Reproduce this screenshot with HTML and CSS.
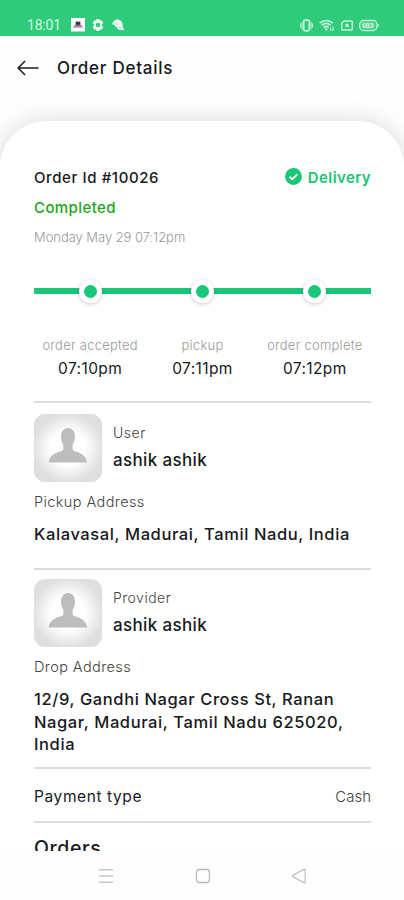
FILE: index.html
```
<!DOCTYPE html>
<html lang="en">
<head>
    <meta charset="UTF-8">
    <meta name="viewport" content="width=device-width, initial-scale=1.0">
    <title>Order Details</title>
    <link rel="stylesheet" href="styles.css">
</head>
<body>
    <div class="status-bar">
        <div class="status-left">
            <span class="clock">18:01</span>
            <svg class="icon-photo" width="14" height="14" viewBox="0 0 14 14">
                <rect width="14" height="13.5" fill="#fff"/>
                <path d="M2 9.5l2.5-3v-3h5v3l2.5 3z" fill="#84647f"/>
                <path d="M5 4h4v2.5H5z" fill="#3f304d"/>
                <path d="M2.5 8.5h9" stroke="#c58b98"/>
            </svg>
            <svg class="icon-gear" width="12" height="12" viewBox="0 0 12 12">
                <path d="M4.5 0h3l.4 1.8 1.8-.5 1.6 2.6L10 5.2v1.6l1.3 1.3-1.6 2.6-1.8-.5-.4 1.8h-3l-.4-1.8-1.8.5L.7 8.1 2 6.8V5.2L.7 3.9l1.6-2.6 1.8.5zM6 3.8a2.2 2.2 0 1 0 0 4.4 2.2 2.2 0 0 0 0-4.4z" fill="#ecfff4" fill-rule="evenodd"/>
            </svg>
            <svg class="icon-bird" width="13" height="12" viewBox="0 0 13 12">
                <path d="M0 5.2C1 2 3.5.2 6.2.6c3 .5 4.400 2.700 4.400 5.400 0 2 .7 3.400 2 4.600-1.800 1-6 .9-7.300-1.100L4.500 7.500 3 7.800 2.800 6z" fill="#e7fbef"/>
                <path d="M3.800 4.200l2 2M6.500 8l2.500 1.200" stroke="#55d38f" stroke-width=".7"/>
            </svg>
        </div>
        <div class="status-right">
            <svg width="13" height="13" viewBox="0 0 13 13" fill="none" stroke="#c4f3d8">
                <rect x="3.700" y="1.200" width="5.600" height="10.600" rx="1.500" stroke-width="1.700"/>
                <path d="M2 2.800v7.400M11 2.800v7.400M.6 4.500v4M12.400 4.500v4" stroke-width="1.100"/>
            </svg>
            <svg width="16" height="13" viewBox="0 0 16 13" fill="none" stroke="#c4f3d8" stroke-width="1.7">
                <path d="M.7 4.100c4-3.400 9.200-3.400 13 0M2.700 6.300c2.700-2.300 6.200-2.300 9 0M4.800 8.500c1.400-1.200 3.400-1.200 4.800 0"/>
                <path d="M7.200 12L5.200 9.400h4z" fill="#c4f3d8" stroke="none"/>
                <path d="M11.700 8.500v3.500M14 7.500v4.500" stroke-width="1.200"/>
            </svg>
            <svg width="12" height="13" viewBox="0 0 12 13" fill="none" stroke="#c4f3d8" stroke-width="1.5">
                <path d="M3 2h7.200c.7 0 1.100.4 1.100 1.100v6.800c0 .7-.4 1.100-1.100 1.100H1.800C1.100 11 .7 10.600.7 9.900V4.300z"/>
                <path d="M4.500 5l3 3M7.500 5l-3 3" stroke-width="1.400"/>
            </svg>
            <svg width="20" height="13" viewBox="0 0 20 13" fill="none" stroke="#c4f3d8">
                <rect x=".7" y="1.500" width="17.200" height="10" rx="4" stroke-width="1.400"/>
                <rect x="2.700" y="3.500" width="13" height="6" rx="2" fill="#86e0af" stroke="none"/>
                <path d="M5 4v5M7.500 4.500h2v4h-2zM12 4l2 2.500-2 2.500M19.200 5v3" stroke-width="1"/>
            </svg>
        </div>
    </div>

    <div class="header">
        <svg class="back" width="22" height="16" viewBox="0 0 22 16">
            <path d="M8 1L1.200 8 8 15M1.200 8h20.300" fill="none" stroke="#1c1c1c" stroke-width="1.500"/>
        </svg>
        <h1>Order Details</h1>
    </div>

    <div class="content">
        <div class="card">
            <div class="order-row">
                <span class="order-id">Order Id #10026</span>
                <span class="delivery">
                    <svg width="17" height="17" viewBox="0 0 17 17">
                        <circle cx="8.500" cy="8.500" r="8.400" fill="#1cc678"/>
                        <path d="M4.500 8.800l2.800 2.500 5-4.900" fill="none" stroke="#fff" stroke-width="1.900"/>
                    </svg>
                    <span>Delivery</span>
                </span>
            </div>
            <div class="order-status">Completed</div>
            <div class="order-date">Monday May 29 07:12pm</div>

            <div class="track">
                <span class="dot"></span>
                <span class="dot"></span>
                <span class="dot"></span>
            </div>
            <div class="steps">
                <div class="step">
                    <p class="step-label">order accepted</p>
                    <p class="step-time">07:10pm</p>
                </div>
                <div class="step">
                    <p class="step-label">pickup</p>
                    <p class="step-time">07:11pm</p>
                </div>
                <div class="step">
                    <p class="step-label">order complete</p>
                    <p class="step-time">07:12pm</p>
                </div>
            </div>

            <div class="section user">
                <div class="person">
                    <div class="avatar">
                        <svg width="40" height="36" viewBox="0 0 40 36">
                            <path d="M20 0c4.500 0 7 3.500 7 9 0 3.300-1 5.800-2.300 7.500v5.200c1 2.300 13.600 2.600 14.300 12.800H.8C1.500 24.300 14.300 24 15.300 21.700v-5.200C14 14.800 13 12.300 13 9c0-5.500 2.500-9 7-9z" fill="#bdbdbd"/>
                        </svg>
                    </div>
                    <div>
                        <p class="role">User</p>
                        <p class="name">ashik ashik</p>
                    </div>
                </div>
                <p class="address-label">Pickup Address</p>
                <p class="address">Kalavasal, Madurai, Tamil Nadu, India</p>
            </div>

            <div class="section provider">
                <div class="person">
                    <div class="avatar">
                        <svg width="40" height="36" viewBox="0 0 40 36">
                            <path d="M20 0c4.500 0 7 3.500 7 9 0 3.300-1 5.800-2.300 7.500v5.200c1 2.300 13.600 2.600 14.300 12.800H.8C1.500 24.300 14.300 24 15.300 21.700v-5.200C14 14.800 13 12.300 13 9c0-5.500 2.500-9 7-9z" fill="#bdbdbd"/>
                        </svg>
                    </div>
                    <div>
                        <p class="role">Provider</p>
                        <p class="name">ashik ashik</p>
                    </div>
                </div>
                <p class="address-label">Drop Address</p>
                <p class="address">12/9, Gandhi Nagar Cross St, Ranan<br>Nagar, Madurai, Tamil Nadu 625020,<br>India</p>
            </div>

            <div class="section payment">
                <span class="payment-label">Payment type</span>
                <span class="payment-value">Cash</span>
            </div>

            <div class="section orders">
                <h2>Orders</h2>
            </div>
        </div>
    </div>

    <div class="nav-bar">
        <svg width="16" height="16" viewBox="0 0 16 16">
            <path d="M1 1.700h14M1 8h14M1 14.300h14" stroke="#c6c6c6" stroke-width="1.400"/>
        </svg>
        <svg width="16" height="16" viewBox="0 0 16 16">
            <rect x="1.500" y="1.500" width="13" height="13" rx="2.500" fill="none" stroke="#bababa" stroke-width="1.300"/>
        </svg>
        <svg width="16" height="16" viewBox="0 0 16 16">
            <path d="M13 1.300L2 7.300q-1 .7 0 1.400l11 6q1.200.4 1.200-.9V2.200q0-1.300-1.200-.9z" fill="none" stroke="#bababa" stroke-width="1.200"/>
        </svg>
    </div>
</body>
</html>
```

FILE: styles.css
```
* {
    box-sizing: border-box;
}
body {
    margin: 0;
    height: 900px;
    display: flex;
    flex-direction: column;
    overflow: hidden;
    background-color: #fefefe;
    color: #17191c;
    font-family: Inter, "Noto Sans", sans-serif;
}
p, h1, h2 {
    margin: 0;
}
svg {
    display: block;
    flex: none;
}
.status-bar {
    height: 36px;
    padding: 14px 25px 0 27px;
    display: flex;
    justify-content: space-between;
    background-color: #2fcb7b;
}
.status-left,
.status-right {
    height: 22px;
    display: flex;
    align-items: center;
}
.clock {
    width: 44px;
    color: #d4f7e3;
    font-family: Roboto, sans-serif;
    font-size: 14px;
    letter-spacing: -0.2px;
}
.icon-gear {
    margin: 0 8px 0 7px;
}
.status-right {
    gap: 6px;
}
.header {
    height: 62px;
    padding: 1px 0 0 17px;
    display: flex;
    align-items: center;
}
.header h1 {
    margin-left: 18px;
    font-size: 17px;
    font-weight: 500;
    letter-spacing: 0.75px;
}
.content {
    flex: 1;
    padding-top: 23px;
    overflow: hidden;
}
.card {
    height: 900px;
    padding: 44px 33px 0 34px;
    border-radius: 46px 46px 0 0;
    background-color: #fff;
    box-shadow: 0 0 24px rgba(0, 0, 0, 0.15);
}
.order-row {
    height: 24px;
    display: flex;
    justify-content: space-between;
    align-items: center;
    font-size: 15px;
    font-weight: 500;
    letter-spacing: 0.6px;
}
.delivery {
    display: flex;
    gap: 6px;
    color: #20c477;
    font-weight: 600;
    letter-spacing: 0.4px;
}
.order-status {
    margin-top: 7px;
    line-height: 24px;
    color: #1ba51b;
    font-size: 15px;
    font-weight: 500;
    letter-spacing: 0.4px;
}
.order-date {
    margin-top: 7px;
    line-height: 20px;
    color: #999;
    font-size: 13px;
    font-weight: 300;
    letter-spacing: -0.05px;
}
.track {
    height: 24px;
    margin-top: 32px;
    display: flex;
    justify-content: space-around;
    align-items: center;
    background: linear-gradient(#1cc678, #1cc678) center / 100% 6px no-repeat;
}
.dot {
    width: 23px;
    height: 23px;
    border: 5.5px solid #fff;
    border-radius: 50%;
    background-color: #1cc678;
    box-shadow: 0 1px 4px rgba(0, 0, 0, 0.2);
}
.steps {
    margin-top: 32px;
    display: flex;
    text-align: center;
}
.step {
    flex: 1;
}
.step-label {
    line-height: 20px;
    color: #999;
    font-size: 13px;
    font-weight: 300;
    letter-spacing: 0.25px;
    white-space: nowrap;
}
.step-time {
    margin-top: 4px;
    line-height: 20px;
    font-size: 15.5px;
    letter-spacing: 0.4px;
}
.section {
    border-top: 2px solid #dcdcdc;
}
.user {
    height: 167px;
    margin-top: 22px;
    padding-top: 11px;
}
.provider {
    height: 199px;
    padding-top: 9px;
}
.person {
    height: 68px;
    display: flex;
    gap: 11px;
}
.avatar {
    width: 68px;
    height: 68px;
    padding-top: 14px;
    display: flex;
    justify-content: center;
    border-radius: 11px;
    background: radial-gradient(circle, #fff 35%, #dfdfdf 73%);
}
.role {
    margin-top: 9px;
    line-height: 20px;
    color: #444;
    font-size: 14px;
    font-weight: 300;
    letter-spacing: 0.5px;
}
.name {
    margin-top: 6px;
    line-height: 22px;
    font-size: 17px;
    font-weight: 500;
    letter-spacing: 0.35px;
}
.address-label {
    margin-top: 9px;
    line-height: 22px;
    color: #444;
    font-size: 14.5px;
    font-weight: 300;
    letter-spacing: 0.4px;
}
.address {
    margin-top: 10px;
    line-height: 22.5px;
    font-size: 16.5px;
    font-weight: 500;
    letter-spacing: 0.6px;
    white-space: nowrap;
}
.payment {
    height: 54px;
    padding-top: 2px;
    display: flex;
    justify-content: space-between;
    align-items: center;
    font-size: 15.5px;
    letter-spacing: 0.6px;
}
.payment-value {
    color: #444;
    font-size: 15px;
    font-weight: 300;
    letter-spacing: 0;
}
.orders h2 {
    margin-top: 12px;
    line-height: 26px;
    font-size: 19.5px;
    font-weight: 500;
    letter-spacing: 0.6px;
}
.nav-bar {
    height: 49px;
    padding: 0 97px 0 98px;
    display: flex;
    justify-content: space-between;
    align-items: center;
    background-color: #fefefe;
}
```
